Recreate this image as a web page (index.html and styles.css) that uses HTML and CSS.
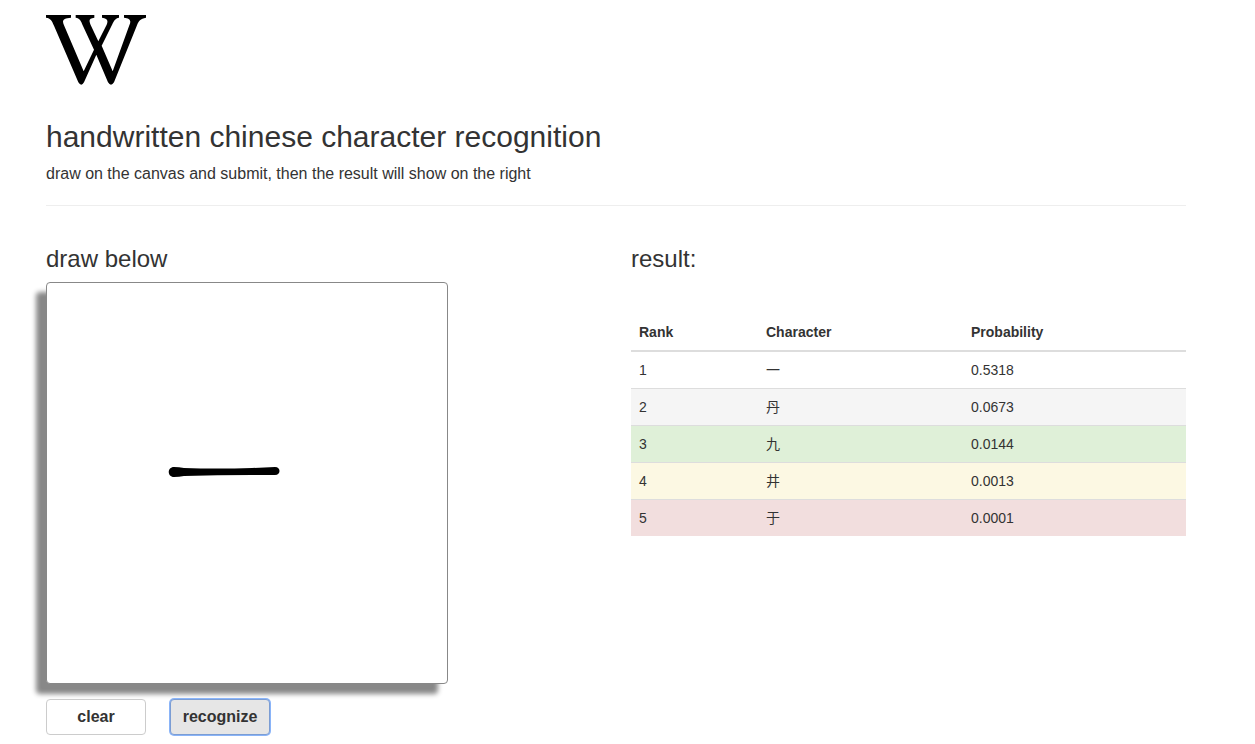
FILE: index.html
```html
<!DOCTYPE html>
<html lang="en">
<head>
<meta charset="utf-8">
<title>handwritten chinese character recognition</title>
<link rel="stylesheet" href="styles.css">
</head>
<body>
<div class="container">
  <header class="page-header">
    <svg class="logo" viewBox="0 0 300 210" role="img" aria-label="Logo">
      <path d="M0 0H75V8C52 10 47 15 54 31L113 169L144 104L111 33C105 16 101 10 89 8V0H145V8C129 10 128 15 134 30L157 79L182 29C188 15 182 10 168 8V0H219V8C208 10 204 17 199 28L167 92L200 169L250 31C257 15 251 10 234 8V0H300V8C283 11 278 17 273 31L204 202Q195 216 186 202L151 119L114 202Q106 216 97 202L24 32C17 16 14 10 0 8Z"/>
    </svg>
    <h1 class="title">handwritten chinese character recognition</h1>
    <p class="lead">draw on the canvas and submit, then the result will show on the right</p>
  </header>
  <main class="row">
    <section class="column">
      <h2 class="subtitle">draw below</h2>
      <div class="board">
        <svg class="drawing" viewBox="0 0 400 400" role="img" aria-label="Drawn stroke">
          <path d="M127 184Q132 184 137 185Q170 186 205 185L228 184C234 184 234 192 228 192L205 192Q170 192 137 193Q132 194 127 194C120 194 120 184 127 184Z"/>
        </svg>
      </div>
      <div class="actions">
        <button type="button" class="button">clear</button>
        <button type="button" class="button button-active">recognize</button>
      </div>
    </section>
    <section class="column">
      <h2 class="subtitle">result:</h2>
      <table class="results">
        <thead>
          <tr><th class="rank" scope="col">Rank</th><th class="character" scope="col">Character</th><th scope="col">Probability</th></tr>
        </thead>
        <tbody lang="zh-CN">
          <tr><td>1</td><td>一</td><td>0.5318</td></tr>
          <tr class="active"><td>2</td><td>丹</td><td>0.0673</td></tr>
          <tr class="success"><td>3</td><td>九</td><td>0.0144</td></tr>
          <tr class="warning"><td>4</td><td>井</td><td>0.0013</td></tr>
          <tr class="danger"><td>5</td><td>于</td><td>0.0001</td></tr>
        </tbody>
      </table>
    </section>
  </main>
</div>
</body>
</html>
```
FILE: styles.css
```css
* { box-sizing: border-box; }
body {
  margin: 0;
  background: #fff;
  color: #333;
  font: 14px/20px "Liberation Sans", "Noto Sans CJK SC", sans-serif;
}
.container {
  max-width: 1255px;
  padding: 15px 69px 8px 46px;
}
.page-header {
  padding-bottom: 20px;
  border-bottom: 1px solid #eee;
}
.logo {
  display: block;
  width: 100px;
  height: 70px;
}
.title {
  margin: 35px 0 10px;
  font-size: 30px;
  line-height: 33px;
}
.lead {
  margin: 0;
  font-size: 16px;
  line-height: 22px;
}
.title, .subtitle { font-weight: normal; }
.row {
  display: grid;
  grid-template-columns: 1fr 1fr;
  gap: 30px;
  padding-top: 40px;
}
.subtitle {
  margin: 0 0 10px;
  font-size: 24px;
  line-height: 26px;
}
.board {
  width: 402px;
  max-width: 100%;
  aspect-ratio: 1;
  background: #fff;
  border: 1px solid #888;
  border-radius: 4px;
  box-shadow: -10px 10px 5px #888;
}
.drawing {
  display: block;
  width: 100%;
}
.actions {
  display: flex;
  gap: 24px;
  margin-top: 15px;
}
.button {
  width: 100px;
  height: 36px;
  padding: 0;
  background: #fff;
  border: 1px solid #ccc;
  border-radius: 4px;
  color: #333;
  font: bold 16px/22px "Liberation Sans", sans-serif;
}
.button-active {
  background: #e6e6e6;
  border-color: #7b9dd4;
  box-shadow: 0 0 0 1px #8ab4f8;
}
.results {
  width: 100%;
  margin-top: 42px;
  border-collapse: collapse;
}
.rank { width: 127px; }
.character { width: 205px; }
.results th, .results td {
  padding: 8px;
  text-align: left;
  vertical-align: top;
  border-top: 1px solid #ddd;
}
.results th {
  border-top: 0;
  border-bottom: 2px solid #ddd;
}
.active { background: #f5f5f5; }
.success { background: #dff0d8; }
.warning { background: #fcf8e3; }
.danger { background: #f2dede; }
```
